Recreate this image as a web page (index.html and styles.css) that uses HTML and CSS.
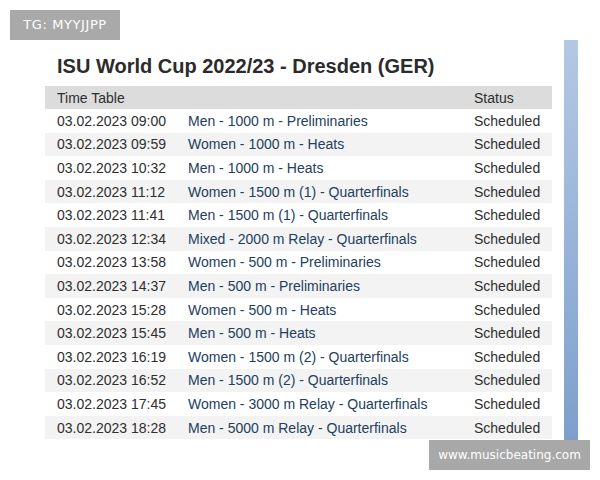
FILE: index.html
```html
<!DOCTYPE html>
<html>
<head>
<meta charset="utf-8">
<link rel="stylesheet" href="styles.css">
</head>
<body>
<div class="page">
  <div class="badge">TG: MYYJJPP</div>
  <div class="sidebar"></div>
  <div class="content">
    <h1 class="title">ISU World Cup 2022/23 - Dresden (GER)</h1>
    <div class="table">
      <div class="row head"><span class="c-time">Time Table</span><span class="c-ev"></span><span class="c-st">Status</span></div>
      <div class="row"><span class="c-time">03.02.2023 09:00</span><span class="c-ev">Men - 1000 m - Preliminaries</span><span class="c-st">Scheduled</span></div>
      <div class="row alt"><span class="c-time">03.02.2023 09:59</span><span class="c-ev">Women - 1000 m - Heats</span><span class="c-st">Scheduled</span></div>
      <div class="row"><span class="c-time">03.02.2023 10:32</span><span class="c-ev">Men - 1000 m - Heats</span><span class="c-st">Scheduled</span></div>
      <div class="row alt"><span class="c-time">03.02.2023 11:12</span><span class="c-ev">Women - 1500 m (1) - Quarterfinals</span><span class="c-st">Scheduled</span></div>
      <div class="row"><span class="c-time">03.02.2023 11:41</span><span class="c-ev">Men - 1500 m (1) - Quarterfinals</span><span class="c-st">Scheduled</span></div>
      <div class="row alt"><span class="c-time">03.02.2023 12:34</span><span class="c-ev">Mixed - 2000 m Relay - Quarterfinals</span><span class="c-st">Scheduled</span></div>
      <div class="row"><span class="c-time">03.02.2023 13:58</span><span class="c-ev">Women - 500 m - Preliminaries</span><span class="c-st">Scheduled</span></div>
      <div class="row alt"><span class="c-time">03.02.2023 14:37</span><span class="c-ev">Men - 500 m - Preliminaries</span><span class="c-st">Scheduled</span></div>
      <div class="row"><span class="c-time">03.02.2023 15:28</span><span class="c-ev">Women - 500 m - Heats</span><span class="c-st">Scheduled</span></div>
      <div class="row alt"><span class="c-time">03.02.2023 15:45</span><span class="c-ev">Men - 500 m - Heats</span><span class="c-st">Scheduled</span></div>
      <div class="row"><span class="c-time">03.02.2023 16:19</span><span class="c-ev">Women - 1500 m (2) - Quarterfinals</span><span class="c-st">Scheduled</span></div>
      <div class="row alt"><span class="c-time">03.02.2023 16:52</span><span class="c-ev">Men - 1500 m (2) - Quarterfinals</span><span class="c-st">Scheduled</span></div>
      <div class="row"><span class="c-time">03.02.2023 17:45</span><span class="c-ev">Women - 3000 m Relay - Quarterfinals</span><span class="c-st">Scheduled</span></div>
      <div class="row alt"><span class="c-time">03.02.2023 18:28</span><span class="c-ev">Men - 5000 m Relay - Quarterfinals</span><span class="c-st">Scheduled</span></div>
    </div>
  </div>
  <div class="watermark">www.musicbeating.com</div>
</div>
</body>
</html>
```

FILE: styles.css
```css
html, body {
  margin: 0;
  padding: 0;
  background: #fff;
}
.page {
  position: relative;
  width: 600px;
  height: 480px;
  font-family: "Liberation Sans", Arial, sans-serif;
}
.badge {
  position: absolute;
  left: 10px;
  top: 10px;
  width: 110px;
  height: 30px;
  background: #a9a9a9;
  color: #fff;
  font-family: "DejaVu Sans", sans-serif;
  font-size: 13px;
  line-height: 30px;
  text-align: center;
  letter-spacing: 0.6px;
}
.sidebar {
  position: absolute;
  left: 564px;
  top: 40px;
  width: 14px;
  height: 400px;
  background: linear-gradient(#b4c8e4, #7e9fcc);
}
.content {
  padding: 54px 0 0 45px;
  width: 507px;
}
.title {
  margin: 0 0 8px 12px;
  font-size: 20px;
  line-height: 24px;
  font-weight: bold;
  color: #2b2b2b;
}
.table {
  display: flex;
  flex-direction: column;
}
.row {
  display: grid;
  grid-template-columns: 143px 286px 1fr;
  height: 23.6px;
  align-items: center;
  font-size: 14px;
  color: #2e2e2e;
}
.row.head {
  height: 23px;
  background: #dcdcdc;
}
.row.alt {
  background: #f3f3f3;
}
.c-time {
  padding-left: 12px;
}
.c-ev {
  color: #22405e;
}
.watermark {
  position: absolute;
  left: 429px;
  top: 440px;
  width: 161px;
  height: 30px;
  background: #a8a8a8;
  color: #fff;
  font-family: "DejaVu Sans", sans-serif;
  font-size: 12px;
  line-height: 30px;
  text-align: center;
}
```
